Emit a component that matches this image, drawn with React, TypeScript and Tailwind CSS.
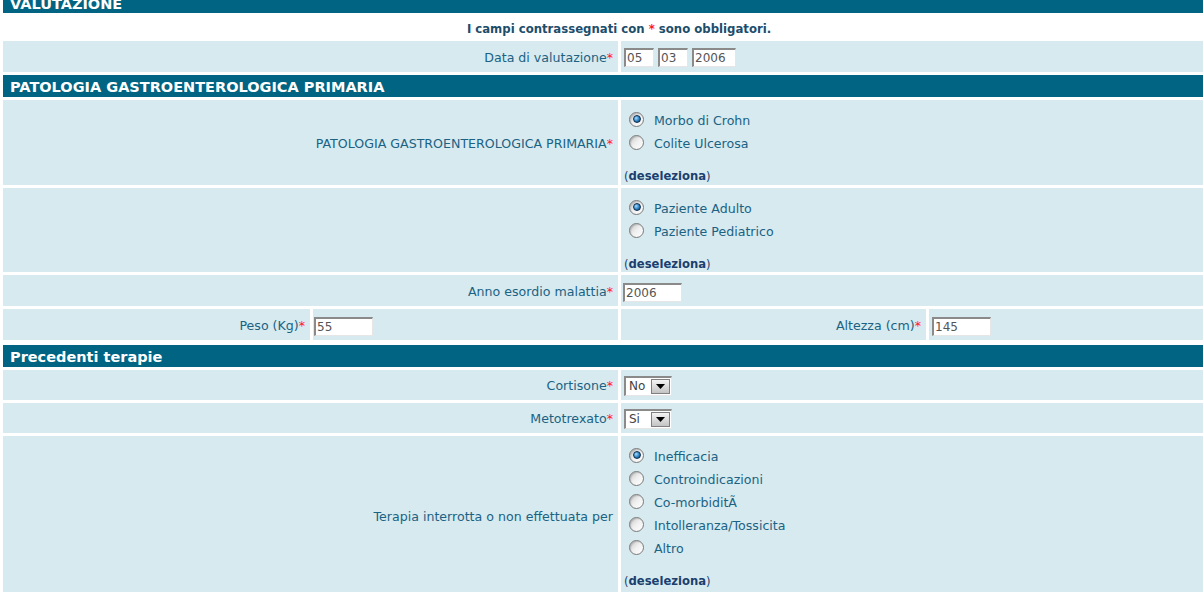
import React from 'react';

const labelTxt = 'text-[#1b6283]';

const Star = () => <span className="text-[#ff1a1a]">*</span>;

const TextBox = ({ value, w }: { value: string; w: string }) => (
    <div className={`${w} h-[19px] bg-white border-t-2 border-l-2 border-t-[#8a8a8a] border-l-[#8a8a8a] border-b border-r border-b-[#e6e6e6] border-r-[#e6e6e6] text-[#555] text-[12px] leading-[16px] pl-[1px]`}>
        {value}
    </div>
);

const SelectBox = ({ value }: { value: string }) => (
    <div className="w-[48px] h-[20px] bg-white border-t-2 border-l-2 border-t-[#8a8a8a] border-l-[#8a8a8a] border-b border-r border-b-[#e6e6e6] border-r-[#e6e6e6] flex items-stretch">
        <span className="flex-1 text-[#444] text-[12px] leading-[17px] pl-[3px]">{value}</span>
        <span className="w-[19px] my-[1px] mr-[1px] bg-gradient-to-b from-[#f4f4f4] to-[#c4c4c4] border border-[#808080] flex items-center justify-center">
            <svg width="9" height="5" viewBox="0 0 9 5"><path d="M0 0h9L4.5 5z" fill="#000" /></svg>
        </span>
    </div>
);

const Radio = ({ checked }: { checked?: boolean }) => (
    <span className="w-[15px] h-[15px] mb-[5px] rounded-full border border-[#7a7a7a] bg-gradient-to-br from-[#c8c8c8] via-[#f0f0f0] to-[#ffffff] flex items-center justify-center shrink-0 shadow-[inset_1px_1px_1px_rgba(0,0,0,0.15)]">
        {checked && <span className="w-[8px] h-[8px] rounded-full border border-[#0b2f4f] bg-[radial-gradient(circle_at_35%_35%,#a8dcff,#2a7fc0_55%,#0b3e66)]" />}
    </span>
);

const RadioGroup = ({ items, checked }: { items: string[]; checked: number }) => (
    <div className="pt-[10px] pb-[1px]">
        {items.map((it, i) => (
            <div key={it} className="h-[23px] flex items-center pl-[6px] gap-[10px]">
                <Radio checked={i === checked} />
                <span className={labelTxt}>{it}</span>
            </div>
        ))}
        <div className="h-[12px]" />
        <div className="h-[16px] leading-[16px] pl-[1px] text-[#1b3f6e] text-[11.6px]">
            (<span className="font-bold">deseleziona</span>)
        </div>
    </div>
);

const Header = ({ title, className = '' }: { title: string; className?: string }) => (
    <div className={`bg-[#006482] text-white font-bold text-[14.5px] pl-[7px] flex items-center ${className}`}>{title}</div>
);

const Row = ({ label, children, h }: { label: React.ReactNode; children: React.ReactNode; h: string }) => (
    <div className={`flex gap-[3px] ${h}`}>
        <div className={`w-[615px] bg-[#d6eaf0] flex items-center justify-end pr-[5px] pt-[3px] ${labelTxt}`}>{label}</div>
        <div className="flex-1 bg-[#d6eaf0] pl-[2px] flex items-center">{children}</div>
    </div>
);

export default function App() {
    return (
        <div className="w-[1203px] h-[592px] overflow-hidden bg-white pl-[3px] text-[12.6px] font-['DejaVu_Sans',Verdana,sans-serif]">
            <div className="flex flex-col gap-[3px]">
                <Header title="VALUTAZIONE" className="h-[22px] -mt-[9px] pt-[6px]" />
                <div className="h-[22px] flex items-center justify-center pt-[5px] pl-[32px] font-bold text-[#1c4e6c] text-[11.7px]">
                    I campi contrassegnati con&nbsp;<span className="text-[#ff1a1a]">*</span>&nbsp;sono obbligatori.
                </div>
                <Row h="h-[31px]" label={<>Data di valutazione<Star /></>}>
                    <div className="flex gap-[4px] pl-[1px] pt-[2px]">
                        <TextBox value="05" w="w-[30px]" />
                        <TextBox value="03" w="w-[30px]" />
                        <TextBox value="2006" w="w-[44px]" />
                    </div>
                </Row>
                <Header title="PATOLOGIA GASTROENTEROLOGICA PRIMARIA" className="h-[22px] pt-[3px]" />
                <Row h="h-[85px]" label={<>PATOLOGIA GASTROENTEROLOGICA PRIMARIA<Star /></>}>
                    <div className="self-start w-full">
                        <RadioGroup items={['Morbo di Crohn', 'Colite Ulcerosa']} checked={0} />
                    </div>
                </Row>
                <Row h="h-[84px]" label={null}>
                    <div className="self-start w-full">
                        <RadioGroup items={['Paziente Adulto', 'Paziente Pediatrico']} checked={0} />
                    </div>
                </Row>
                <Row h="h-[31px]" label={<>Anno esordio malattia<Star /></>}>
                    <div className="pt-[3px]"><TextBox value="2006" w="w-[59px]" /></div>
                </Row>
                <div className="flex gap-[3px] h-[31px]">
                    <div className={`w-[307px] bg-[#d6eaf0] flex items-center justify-end pr-[5px] pt-[3px] ${labelTxt}`}>Peso (Kg)<Star /></div>
                    <div className="w-[305px] bg-[#d6eaf0] pl-[1px] pt-[3px] flex items-center"><TextBox value="55" w="w-[59px]" /></div>
                    <div className={`w-[305px] bg-[#d6eaf0] flex items-center justify-end pr-[5px] pt-[3px] ${labelTxt}`}>Altezza (cm)<Star /></div>
                    <div className="flex-1 bg-[#d6eaf0] pl-[3px] pt-[3px] flex items-center"><TextBox value="145" w="w-[59px]" /></div>
                </div>
                <Header title="Precedenti terapie" className="h-[22px] mt-[2px] pt-[3px]" />
                <Row h="h-[30px]" label={<>Cortisone<Star /></>}>
                    <div className="pl-[1px] pt-[2px]"><SelectBox value="No" /></div>
                </Row>
                <Row h="h-[30px]" label={<>Metotrexato<Star /></>}>
                    <div className="pl-[1px] pt-[2px]"><SelectBox value="Si" /></div>
                </Row>
                <Row h="h-[160px]" label="Terapia interrotta o non effettuata per">
                    <div className="self-start w-full">
                        <RadioGroup items={['Inefficacia', 'Controindicazioni', 'Co-morbiditÃ', 'Intolleranza/Tossicita', 'Altro']} checked={0} />
                    </div>
                </Row>
            </div>
        </div>
    );
}
